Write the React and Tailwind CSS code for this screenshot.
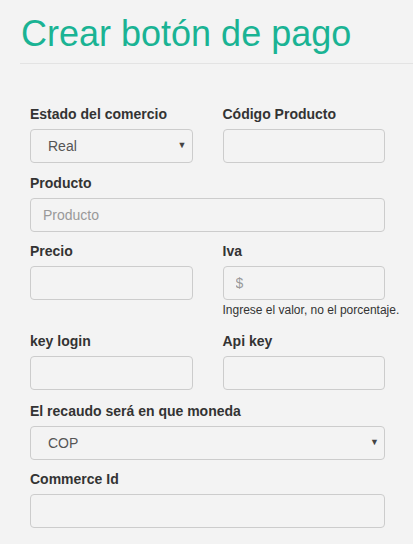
import React from "react";

const Label = ({ children }) => (
  <label className="block text-[14px] leading-[20px] font-bold text-[#333]">{children}</label>
);

const Input = ({ placeholder }) => (
  <input
    placeholder={placeholder}
    className="mt-[5px] block w-full h-[34px] rounded-[4px] border border-[#ccc] bg-transparent px-3 text-[14px] text-[#555] placeholder:text-[#999] outline-none"
  />
);

const Select = ({ value }) => (
  <div className="mt-[5px] flex items-center justify-between h-[34px] rounded-[4px] border border-[#ccc] pl-[17px] pr-[5px] text-[14px] text-[#555]">
    <span>{value}</span>
    <span className="text-[9px] text-[#444]">▼</span>
  </div>
);

const App = () => {
  return (
    <div className="min-h-[544px] bg-[#f3f3f3] font-['Liberation_Sans',Arial,sans-serif]">
      {/* Header */}
      <div className="pl-[20px] pt-[12px]">
        <h1 className="text-[36px] leading-[44px] text-[#1ab394] pl-[1px]">Crear botón de pago</h1>
        <div className="mt-[7px] border-b border-[#e3e3e3]"></div>
      </div>

      {/* Form */}
      <div className="w-[355px] ml-[30px] pt-[40px]">
        <div className="grid grid-cols-2 gap-x-[30px]">
          <div>
            <Label>Estado del comercio</Label>
            <Select value="Real" />
          </div>
          <div>
            <Label>Código Producto</Label>
            <Input />
          </div>
        </div>

        <div className="mt-[10px]">
          <Label>Producto</Label>
          <Input placeholder="Producto" />
        </div>

        <div className="mt-[9px] grid grid-cols-2 gap-x-[30px]">
          <div>
            <Label>Precio</Label>
            <Input />
          </div>
          <div>
            <Label>Iva</Label>
            <Input placeholder="$" />
            <p className="mt-[2px] text-[12px] leading-[16px] text-[#333] whitespace-nowrap">Ingrese el valor, no el porcentaje.</p>
          </div>
        </div>

        <div className="mt-[13px] grid grid-cols-2 gap-x-[30px]">
          <div>
            <Label>key login</Label>
            <Input />
          </div>
          <div>
            <Label>Api key</Label>
            <Input />
          </div>
        </div>

        <div className="mt-[11px]">
          <Label>El recaudo será en que moneda</Label>
          <Select value="COP" />
        </div>

        <div className="mt-[9px]">
          <Label>Commerce Id</Label>
          <Input />
        </div>
      </div>
    </div>
  );
};

export default App;
